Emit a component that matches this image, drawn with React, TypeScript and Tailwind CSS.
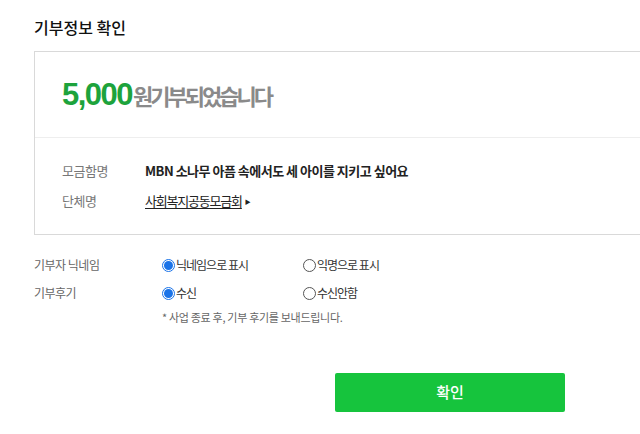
import React from 'react';

// Custom radio circle (native one renders differently headless)
function Radio({ checked, label }: { checked?: boolean; label: string }) {
  return (
    <label className="flex items-center text-[12px] text-[#333] tracking-[-1px]">
      {checked ? (
        <span className="flex h-[13px] w-[13px] items-center justify-center rounded-full border border-[#1a73e8] bg-white">
          <span className="h-[9px] w-[9px] rounded-full bg-[#1a73e8]" />
        </span>
      ) : (
        <span className="h-[13px] w-[13px] rounded-full border border-[#555] bg-white" />
      )}
      <span className="ml-[1px]">{label}</span>
    </label>
  );
}

export default function App() {
  return (
    <div
      className="h-[434px] w-[640px] overflow-hidden bg-white pl-[34px]"
      style={{ fontFamily: '"Noto Sans CJK KR", "Noto Sans", sans-serif' }}
    >
      {/* Page title */}
      <h1 className="pt-[16px] text-[16px] font-medium leading-[22px] tracking-[0px] text-[#111]">
        기부정보 확인
      </h1>

      {/* Summary box */}
      <div className="mt-[13px] border-y border-l border-[#d9d9d9]">
        <div className="flex h-[85px] items-center pl-[27px]">
          <span className="font-['Liberation_Sans',sans-serif] text-[31px] font-bold leading-none tracking-[-1.5px] text-[#1da33c]">
            5,000
          </span>
          <span className="ml-[1px] text-[22px] font-bold leading-none tracking-[-3px] text-[#8a8a8a]">
            원기부되었습니다
          </span>
        </div>
        <div className="border-t border-[#eeeeee] pl-[27px] pt-[22px] pb-[22px]">
          <div className="flex h-[22px] items-center text-[13px] tracking-[-0.5px]">
            <span className="w-[83px] text-[#777]">모금함명</span>
            <span className="font-bold text-[#222]">MBN 소나무 아픔 속에서도 세 아이를 지키고 싶어요</span>
          </div>
          <div className="mt-[8px] flex h-[22px] items-center text-[13px] tracking-[-0.5px]">
            <span className="w-[83px] text-[#777]">단체명</span>
            <span className="tracking-[-1.2px] text-[#222] underline underline-offset-2">사회복지공동모금회</span>
            <span className="ml-[3px] text-[6px] text-[#222]">▶</span>
          </div>
        </div>
      </div>

      {/* Options */}
      <div className="pt-[20px] text-[12px] tracking-[-0.5px]">
        <div className="flex h-[20px] items-center">
          <span className="w-[128px] text-[#666]">기부자 닉네임</span>
          <div className="w-[141px]">
            <Radio checked label="닉네임으로 표시" />
          </div>
          <Radio label="익명으로 표시" />
        </div>
        <div className="mt-[8px] flex h-[20px] items-center">
          <span className="w-[128px] text-[#666]">기부후기</span>
          <div className="w-[141px]">
            <Radio checked label="수신" />
          </div>
          <Radio label="수신안함" />
        </div>
        <div className="mt-[6px] pl-[128px] text-[11px] tracking-[-0.3px] text-[#666]">
          * 사업 종료 후, 기부 후기를 보내드립니다.
        </div>
      </div>

      {/* Confirm button */}
      <div className="mt-[47px] pl-[301px]">
        <button className="flex h-[39px] w-[230px] items-center justify-center rounded-[2px] bg-[#16c43d] text-[15px] font-medium text-white">
          확인
        </button>
      </div>
    </div>
  );
}
